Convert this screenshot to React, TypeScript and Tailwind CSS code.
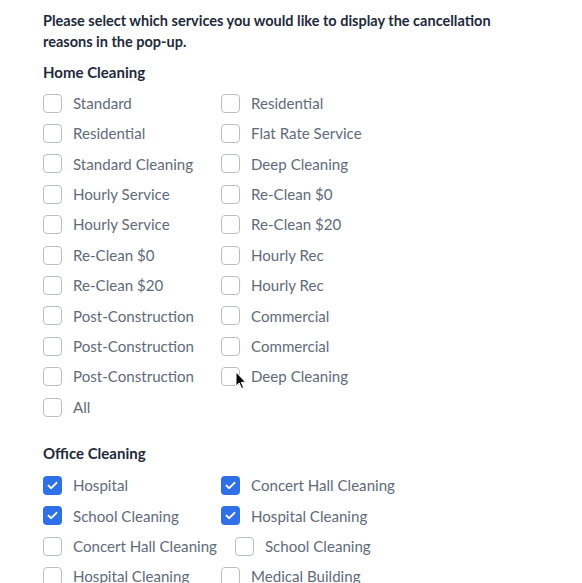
import React from 'react';

type Item = { label: string; checked?: boolean; cursor?: boolean };

const home: Item[] = [
    { label: 'Standard' },
    { label: 'Residential' },
    { label: 'Residential' },
    { label: 'Flat Rate Service' },
    { label: 'Standard Cleaning' },
    { label: 'Deep Cleaning' },
    { label: 'Hourly Service' },
    { label: 'Re-Clean $0' },
    { label: 'Hourly Service' },
    { label: 'Re-Clean $20' },
    { label: 'Re-Clean $0' },
    { label: 'Hourly Rec' },
    { label: 'Re-Clean $20' },
    { label: 'Hourly Rec' },
    { label: 'Post-Construction' },
    { label: 'Commercial' },
    { label: 'Post-Construction' },
    { label: 'Commercial' },
    { label: 'Post-Construction' },
    { label: 'Deep Cleaning', cursor: true },
    { label: 'All' },
];

const office: Item[] = [
    { label: 'Hospital', checked: true },
    { label: 'Concert Hall Cleaning', checked: true },
    { label: 'School Cleaning', checked: true },
    { label: 'Hospital Cleaning', checked: true },
    { label: 'Concert Hall Cleaning' },
    { label: 'School Cleaning' },
    { label: 'Hospital Cleaning' },
    { label: 'Medical Building' },
];

const Cursor = () => (
    <svg className="absolute left-[14px] top-[4px] pointer-events-none" width="12" height="19" viewBox="0 0 12 19">
        <path d="M1 1 L1 15 L4.2 12 L6.6 17.5 L8.6 16.6 L6.3 11.3 L10.6 11.3 Z" fill="#000" stroke="#fff" strokeWidth="1" strokeLinejoin="round" />
    </svg>
);

const Check = ({ item }: { item: Item }) => (
    <label className="flex items-center h-[30.4px] min-w-[160px] mr-[18px]">
        <span className="relative">
            {item.checked ? (
                <span className="flex items-center justify-center w-[19px] h-[19px] rounded-[4px] bg-[#2f6fe8]">
                    <svg width="11" height="9" viewBox="0 0 11 9">
                        <path d="M1.5 4.6 L4.2 7.2 L9.5 1.8" fill="none" stroke="#fff" strokeWidth="1.9" strokeLinecap="round" strokeLinejoin="round" />
                    </svg>
                </span>
            ) : (
                <span className="block w-[19px] h-[19px] rounded-[4px] border border-[#b9bfc8] bg-white" />
            )}
            {item.cursor && <Cursor />}
        </span>
        <span className="ml-[11px] text-[15.1px] text-[#5f6b7a]">{item.label}</span>
    </label>
);

const Group = ({ title, items, gap }: { title: string; items: Item[]; gap: string }) => (
    <div>
        <h3 className="text-[15px] font-bold text-[#1e2a3b] leading-[20px]">{title}</h3>
        <div className={`flex flex-wrap ${gap}`}>
            {items.map((item, i) => (
                <Check key={i} item={item} />
            ))}
        </div>
    </div>
);

export default function App() {
    return (
        <div className="min-h-screen bg-white pl-[43px] pr-[40px] pt-[10px] font-['Lato','Liberation_Sans',sans-serif]">
            <p className="max-w-[500px] text-[14.5px] font-bold leading-[21px] text-[#1e2a3b]">
                Please select which services you would like to display the cancellation reasons in the pop-up.
            </p>
            <div className="mt-[10px]">
                <Group title="Home Cleaning" items={home} gap="mt-[6px]" />
            </div>
            <div className="mt-[21px]">
                <Group title="Office Cleaning" items={office} gap="mt-[7px]" />
            </div>
        </div>
    );
}
